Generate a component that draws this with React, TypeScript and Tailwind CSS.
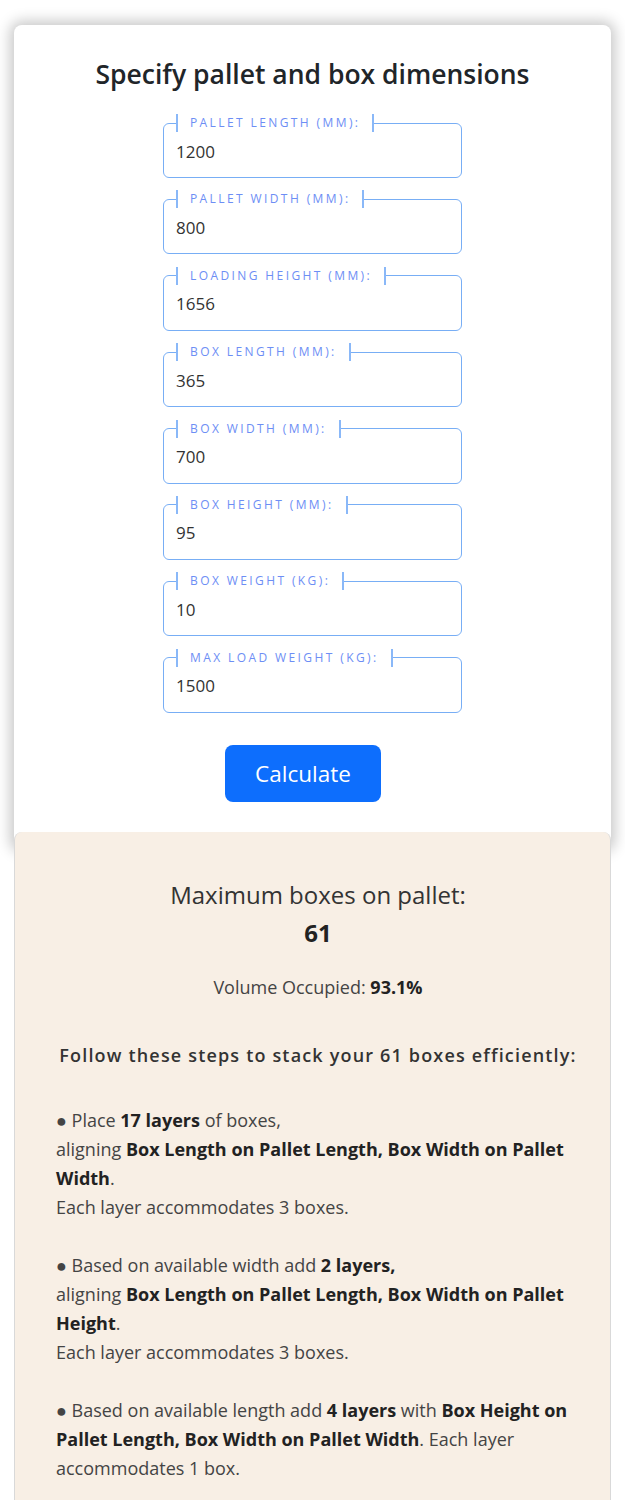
import React, { useState } from 'react';

const fields = [
  { key: 'palletLength', label: 'Pallet Length (mm):', value: '1200' },
  { key: 'palletWidth', label: 'Pallet Width (mm):', value: '800' },
  { key: 'loadingHeight', label: 'Loading Height (mm):', value: '1656' },
  { key: 'boxLength', label: 'Box Length (mm):', value: '365' },
  { key: 'boxWidth', label: 'Box Width (mm):', value: '700' },
  { key: 'boxHeight', label: 'Box Height (mm):', value: '95' },
  { key: 'boxWeight', label: 'Box Weight (kg):', value: '10' },
  { key: 'maxLoad', label: 'Max Load Weight (kg):', value: '1500' },
];

const App: React.FC = () => {
  const [values, setValues] = useState<Record<string, string>>(
    Object.fromEntries(fields.map((f) => [f.key, f.value]))
  );

  return (
    <div
      className="min-h-screen bg-white px-[14px] pt-[25px] text-[#333]"
      style={{ fontFamily: '"Open Sans", "Noto Sans", sans-serif' }}
    >
      {/* Form card */}
      <div className="rounded-lg bg-white pt-[30px] pb-[46px] shadow-[0_0_14px_4px_rgba(0,0,0,0.22)]">
        <h2 className="text-center text-[26.5px] font-semibold leading-[38px] text-[#212529]">
          Specify pallet and box dimensions
        </h2>

        <form className="mt-[21px] flex flex-col items-center gap-[12.4px]" onSubmit={(e) => e.preventDefault()}>
          {fields.map((f) => (
            <fieldset
              key={f.key}
              className="w-[299px] rounded-md border border-[#78aef5] px-3 pb-[7px]"
            >
              <legend className="border-x-2 border-[#8ab8f8] px-3 text-[12px] leading-[18px] tracking-[0.2em] text-[#6d8ef5] uppercase">
                {f.label}
              </legend>
              <input
                type="text"
                value={values[f.key]}
                onChange={(e) => setValues({ ...values, [f.key]: e.target.value })}
                className="h-[38px] w-full bg-transparent text-[17px] text-[#333] outline-none"
              />
            </fieldset>
          ))}

          <button
            type="submit"
            className="mt-[20px] mr-[19px] h-[57px] w-[156px] rounded-lg bg-[#0d6efd] text-[22.5px] text-white"
          >
            Calculate
          </button>
        </form>
      </div>

      {/* Results */}
      <div className="relative -mt-[16px] rounded-t-lg border-x border-[#d9d9d9] bg-[#f8efe5] pt-[44px] pr-[30px] pb-10 pl-[41px] text-[#444]">
        <div className="text-center text-[24px] leading-[38px] text-[#333]">
          Maximum boxes on pallet:
          <div className="font-bold text-[#222]">61</div>
        </div>

        <p className="mt-[22px] text-center text-[18px] leading-[26px]">
          Volume Occupied: <b className="text-[#222]">93.1%</b>
        </p>

        <p className="mt-[42px] text-center text-[18px] font-semibold leading-[26px] tracking-[0.065em] text-[#333]">
          Follow these steps to stack your 61 boxes efficiently:
        </p>

        <div className="mt-[38px] text-[18px] leading-[29px]">
          <p>
            ● Place <b className="text-[#222]">17 layers</b> of boxes,
            <br />
            aligning <b className="text-[#222]">Box Length on Pallet Length, Box Width on Pallet Width</b>.
            <br />
            Each layer accommodates 3 boxes.
          </p>
          <br />
          <p>
            ● Based on available width add <b className="text-[#222]">2 layers,</b>
            <br />
            aligning <b className="text-[#222]">Box Length on Pallet Length, Box Width on Pallet Height</b>.
            <br />
            Each layer accommodates 3 boxes.
          </p>
          <br />
          <p>
            ● Based on available length add <b className="text-[#222]">4 layers</b> with{' '}
            <b className="text-[#222]">Box Height on Pallet Length, Box Width on Pallet Width</b>. Each layer
            accommodates 1 box.
          </p>
        </div>
      </div>
    </div>
  );
};

export default App;
